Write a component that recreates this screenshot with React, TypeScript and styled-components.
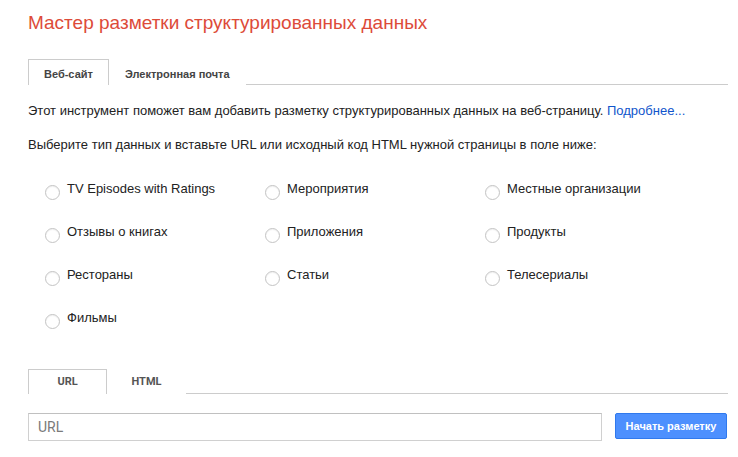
import React from "react";
import styled, { createGlobalStyle } from "styled-components";

const Global = createGlobalStyle`
  html, body { margin: 0; padding: 0; background: #fff; }
  body { font-family: "Liberation Sans", Arial, sans-serif; color: #222; }
`;

const Page = styled.div`
  width: 700px;
  padding: 11px 10px 0 28px;
`;

const Title = styled.h1`
  margin: 0;
  font-size: 19px;
  line-height: 24px;
  font-weight: normal;
  color: #dd4b39;
`;

const TabBar = styled.div<{ $top: number; $height: number }>`
  display: flex;
  margin-top: ${(p) => p.$top}px;
  height: ${(p) => p.$height}px;
  border-bottom: 1px solid #cccccc;
`;

const Tab = styled.div<{ $active?: boolean }>`
  box-sizing: border-box;
  height: 26px;
  padding: 6px 15px 0;
  line-height: 17px;
  font-size: 11px;
  font-weight: bold;
  color: #444;
  background: #fff;
  border: 1px solid ${(p) => (p.$active ? "#cccccc" : "transparent")};
  border-bottom: none;
  white-space: nowrap;
`;

const SmallTab = styled.div<{ $active?: boolean }>`
  box-sizing: border-box;
  width: 79px;
  height: 25px;
  padding-top: 4px;
  line-height: 15px;
  text-align: center;
  font-family: Roboto, "Liberation Sans", sans-serif;
  font-size: 11px;
  font-weight: bold;
  color: #555;
  background: #fff;
  border: 1px solid ${(p) => (p.$active ? "#cccccc" : "transparent")};
  border-bottom: none;
`;

const Para = styled.p<{ $top: number }>`
  margin: ${(p) => p.$top}px 0 0;
  font-size: 13px;
  line-height: 16px;
  color: #222;
`;

const Link = styled.a`
  color: #1155cc;
  text-decoration: none;
`;

const Grid = styled.div`
  display: grid;
  grid-template-columns: 220px 220px 220px;
  grid-auto-rows: 19px;
  row-gap: 24px;
  margin-top: 28px;
  padding-left: 17px;
`;

const Option = styled.label`
  display: flex;
  align-items: flex-start;
  gap: 7px;
  font-size: 13px;
  line-height: 16px;
  color: #222;
`;

const Radio = styled.input`
  appearance: none;
  box-sizing: border-box;
  margin: 4px 0 0;
  width: 15px;
  height: 15px;
  border-radius: 50%;
  border: 1px solid #c4c4c4;
  background: #fff;
  box-shadow: inset 0 1px 1px rgba(0, 0, 0, 0.06);
  flex: none;
`;

const InputRow = styled.div`
  display: flex;
  align-items: flex-start;
  gap: 13px;
  margin-top: 19px;
`;

const UrlInput = styled.input`
  box-sizing: border-box;
  width: 574px;
  height: 28px;
  margin: 0;
  padding: 0 9px;
  border: 1px solid #d0d0d0;
  border-top-color: #c0c0c0;
  border-radius: 0;
  font-family: Roboto, "Liberation Sans", sans-serif;
  font-size: 14px;
  color: #222;
  outline: none;
  &::placeholder { color: #7a7a7a; }
`;

const Button = styled.button`
  box-sizing: border-box;
  width: 112px;
  height: 26px;
  margin: 0;
  padding: 0;
  border: 1px solid #3079ed;
  border-radius: 2px;
  background: #4d90fe;
  color: #fff;
  font-family: "Liberation Sans", Arial, sans-serif;
  font-size: 11px;
  font-weight: bold;
`;

const options = [
  "TV Episodes with Ratings",
  "Мероприятия",
  "Местные организации",
  "Отзывы о книгах",
  "Приложения",
  "Продукты",
  "Рестораны",
  "Статьи",
  "Телесериалы",
  "Фильмы",
];

export default function App() {
  return (
    <>
      <Global />
      <Page>
        <Title>Мастер разметки структурированных данных</Title>
        <TabBar $top={24} $height={25}>
          <Tab $active>Веб-сайт</Tab>
          <Tab>Электронная почта</Tab>
        </TabBar>
        <Para $top={18}>
          Этот инструмент поможет вам добавить разметку структурированных данных на веб-страницу.{" "}
          <Link href="#">Подробнее...</Link>
        </Para>
        <Para $top={18}>
          Выберите тип данных и вставьте URL или исходный код HTML нужной страницы в поле ниже:
        </Para>
        <Grid>
          {options.map((o) => (
            <Option key={o}>
              <Radio type="radio" name="type" />
              {o}
            </Option>
          ))}
        </Grid>
        <TabBar $top={40} $height={24}>
          <SmallTab $active>URL</SmallTab>
          <SmallTab>HTML</SmallTab>
        </TabBar>
        <InputRow>
          <UrlInput placeholder="URL" />
          <Button>Начать разметку</Button>
        </InputRow>
      </Page>
    </>
  );
}
